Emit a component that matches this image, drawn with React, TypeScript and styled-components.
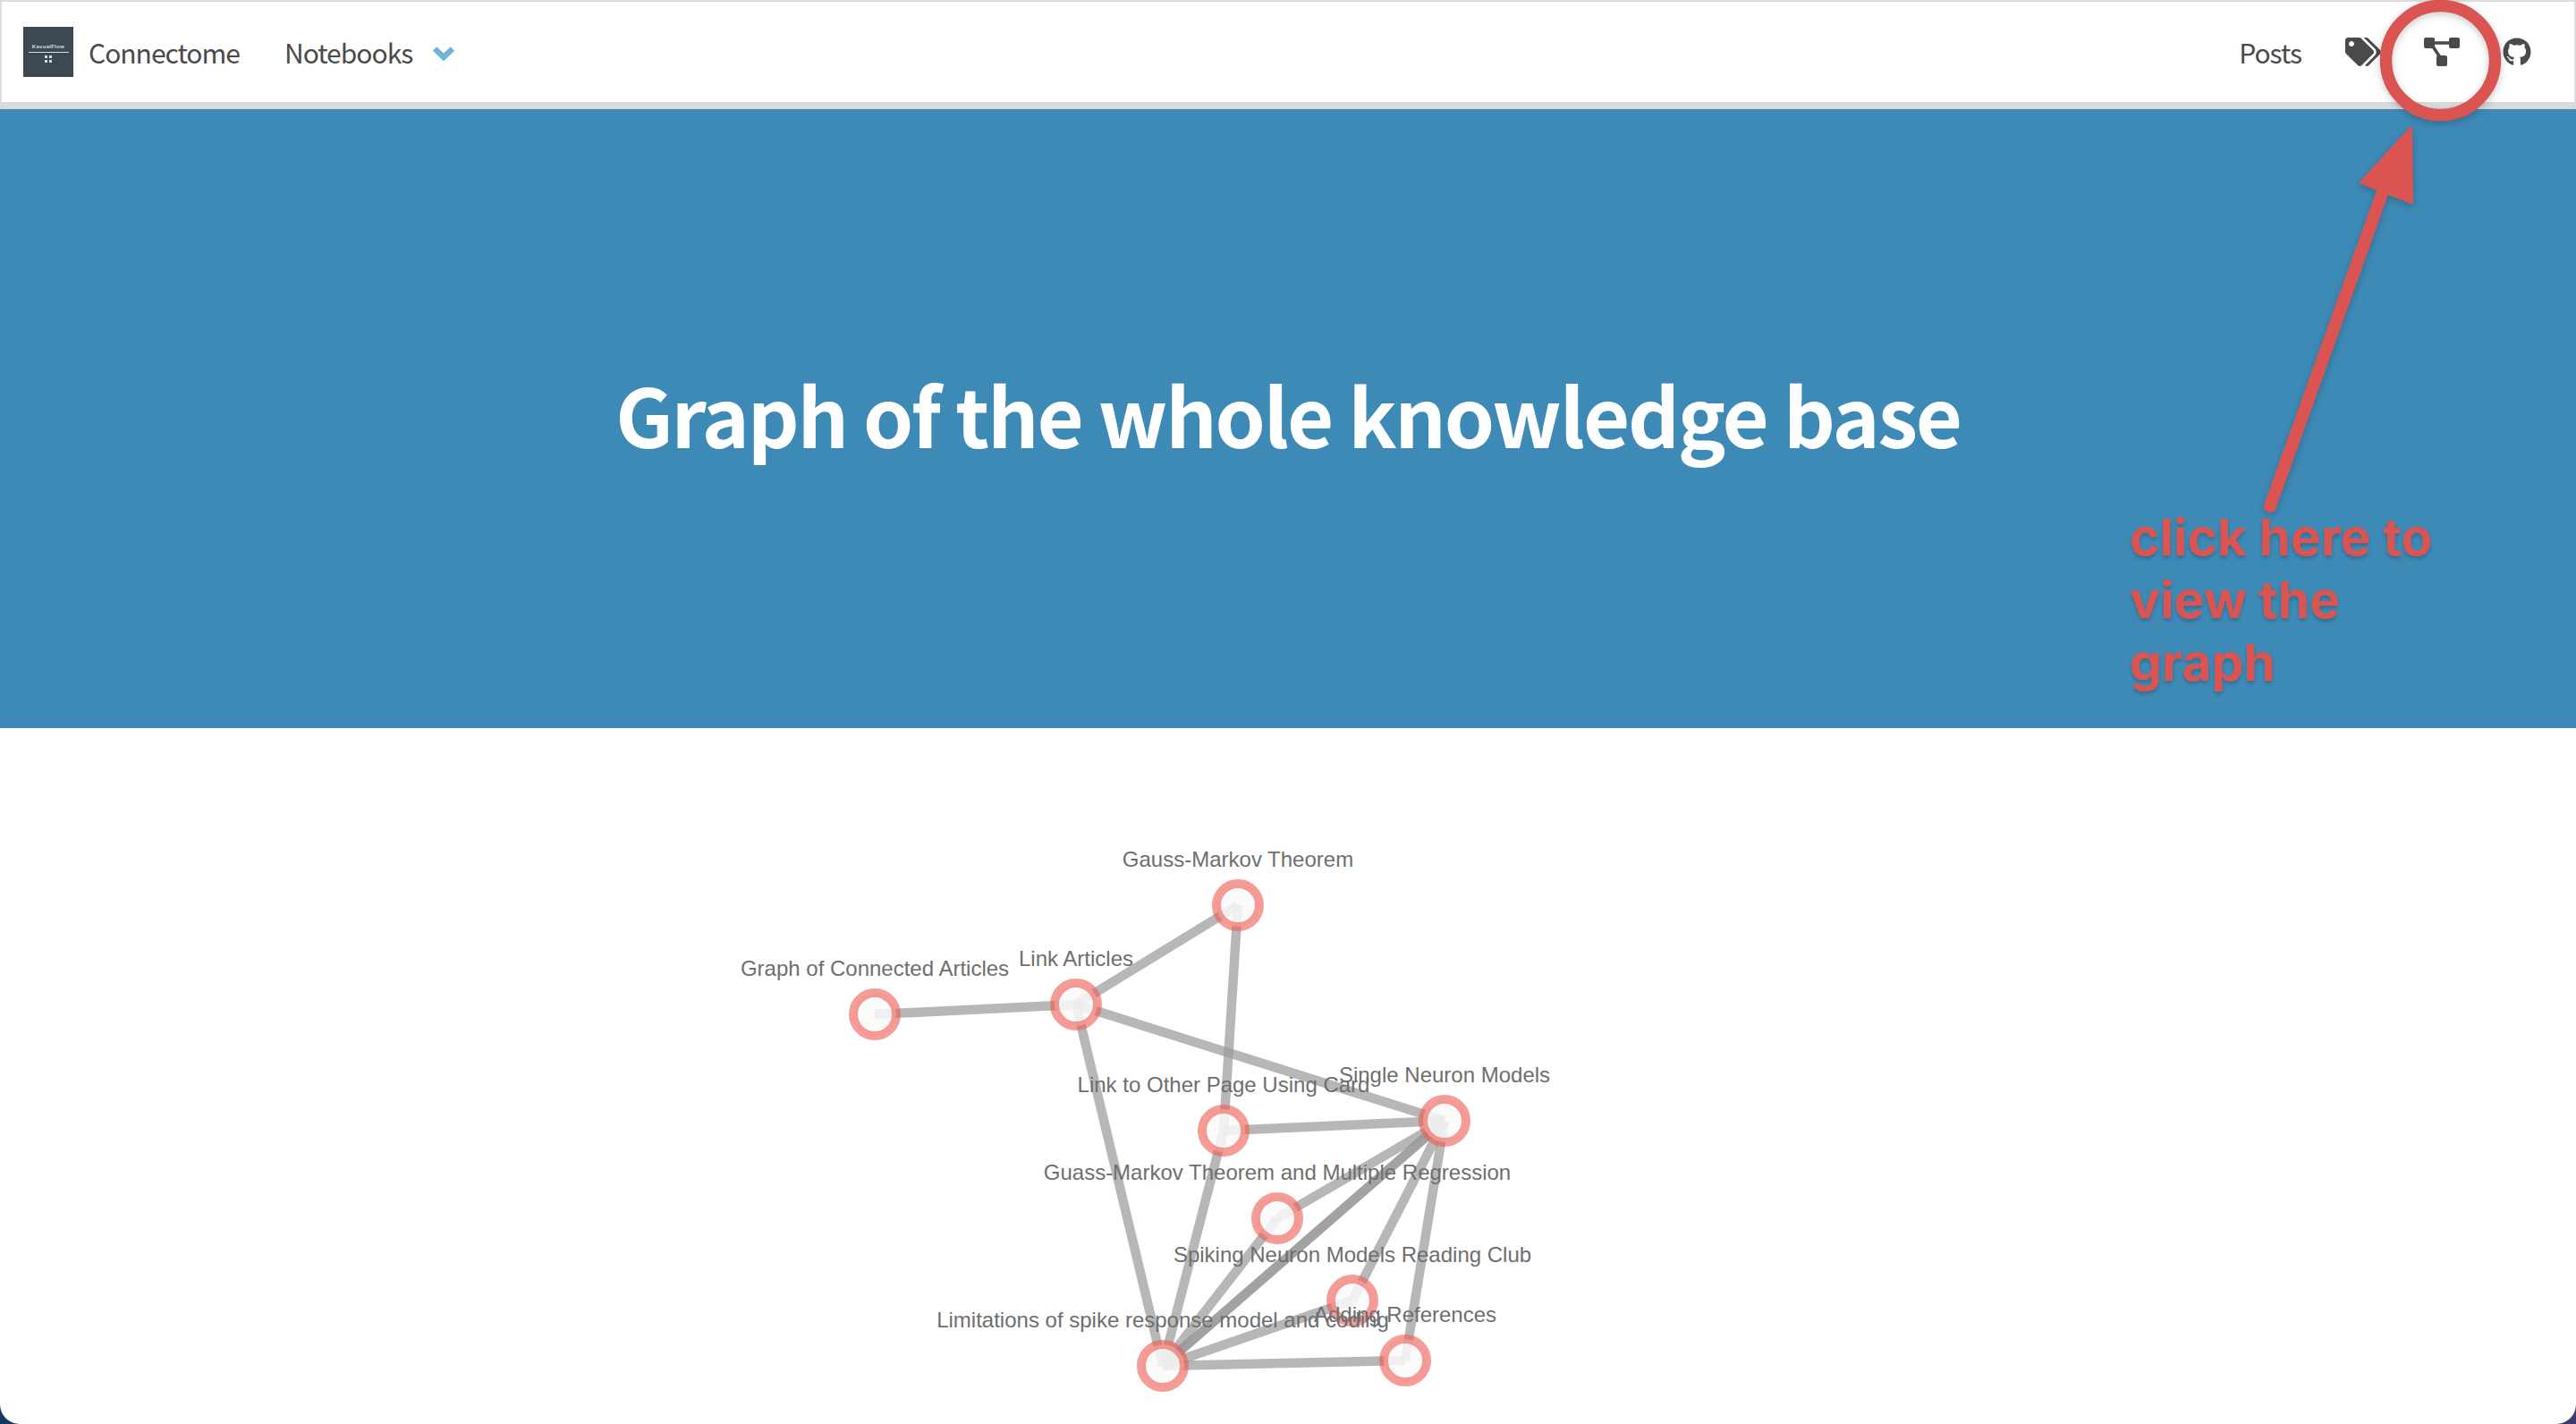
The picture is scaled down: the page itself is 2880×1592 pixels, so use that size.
import React from "react";
import styled, { createGlobalStyle } from "styled-components";
import { FaGithub, FaTags } from "react-icons/fa";

type GraphNode = {
  id: string;
  title: string;
  x: number;
  y: number;
};

const nodes: GraphNode[] = [
  { id: "connected", title: "Graph of Connected Articles", x: 978, y: 1133 },
  { id: "link", title: "Link Articles", x: 1203, y: 1122 },
  { id: "gauss", title: "Gauss-Markov Theorem", x: 1384, y: 1011 },
  { id: "card", title: "Link to Other Page Using Card", x: 1368, y: 1263 },
  { id: "single", title: "Single Neuron Models", x: 1615, y: 1252 },
  { id: "guass", title: "Guass-Markov Theorem and Multiple Regression", x: 1428, y: 1361 },
  { id: "club", title: "Spiking Neuron Models Reading Club", x: 1512, y: 1453 },
  { id: "limits", title: "Limitations of spike response model and coding", x: 1300, y: 1526 },
  { id: "refs", title: "Adding References", x: 1571, y: 1520 },
];

const edges: [string, string][] = [
  ["connected", "link"],
  ["link", "gauss"],
  ["link", "single"],
  ["link", "limits"],
  ["gauss", "card"],
  ["card", "single"],
  ["card", "limits"],
  ["guass", "single"],
  ["guass", "limits"],
  ["single", "limits"],
  ["single", "limits"],
  ["single", "club"],
  ["club", "limits"],
  ["single", "refs"],
  ["refs", "limits"],
];

const findNode = (id: string) => nodes.find((n) => n.id === id) as GraphNode;

const GlobalStyle = createGlobalStyle`
  html, body {
    margin: 0;
    padding: 0;
    background: linear-gradient(90deg, #14395f, #3b3b6b);
  }
`;

export default function App() {
  return (
    <>
      <GlobalStyle />
      <Page>
        <Navbar>
          <NavGroup>
            <Logo>
              <LogoName>KasualFlow</LogoName>
              <LogoRule />
              <LogoDots>
                <i /><i /><i /><i />
              </LogoDots>
            </Logo>
            <BrandLink>Connectome</BrandLink>
            <DropdownLink>
              Notebooks
              <Chevron width="26" height="17" viewBox="0 0 26 17">
                <path d="M3 3.5l10 9.500 10-9.500" fill="none" stroke="#72b5dc" strokeWidth="6.500" />
              </Chevron>
            </DropdownLink>
          </NavGroup>
          <NavIcons>
            <PostsLink>Posts</PostsLink>
            <TagsIcon />
            <GraphIcon width="40" height="32" viewBox="0 0 40 32">
              <rect x="0" y="0" width="12" height="12" rx="2" />
              <rect x="28" y="0" width="12" height="12" rx="2" />
              <rect x="14" y="20" width="12" height="12" rx="2" />
              <path d="M10 6h20M10 10l8 12" stroke="#4a4a4a" strokeWidth="3.5" fill="none" />
            </GraphIcon>
            <GithubIcon />
          </NavIcons>
        </Navbar>

        <Hero>
          <HeroTitle>Graph of the whole knowledge base</HeroTitle>
        </Hero>

        <GraphSection>
          <GraphCanvas viewBox="0 813 2880 778">
            {edges.map(([from, to], i) => {
              const a = findNode(from);
              const b = findNode(to);
              return <Edge key={i} x1={a.x} y1={a.y} x2={b.x} y2={b.y} />;
            })}
            {nodes.map((n) => (
              <Node key={n.id} cx={n.x} cy={n.y} r={24} />
            ))}
            {nodes.map((n) => (
              <Label key={n.id} x={n.x} y={n.y - 43}>
                {n.title}
              </Label>
            ))}
          </GraphCanvas>
        </GraphSection>

        <Annotation viewBox="0 0 2880 1592">
          <circle cx="2728.5" cy="67.5" r="61" fill="none" stroke="#da5552" strokeWidth="13.5" />
          <path
            d="M2538 566L2664 214"
            fill="none"
            stroke="#da5552"
            strokeWidth="14"
            strokeLinecap="round"
          />
          <path
            d="M2695 144L2640 204L2696 226Z"
            fill="#da5552"
            stroke="#da5552"
            strokeWidth="4"
            strokeLinejoin="round"
          />
        </Annotation>
        <AnnotationText>click here to view the graph</AnnotationText>
      </Page>
    </>
  );
}

const Page = styled.div`
  position: relative;
  width: 2880px;
  height: 1592px;
  overflow: hidden;
  background: #fff;
  border-radius: 0 0 22px 22px;
`;

const Navbar = styled.nav`
  box-sizing: border-box;
  display: flex;
  align-items: center;
  justify-content: space-between;
  height: 122px;
  padding: 0 48px 0 24px;
  background: #fff;
  border: 2px solid #dcdcdc;
  border-bottom: 8px solid #d9dadb;
  font-family: "Noto Sans CJK SC", "Source Sans Pro", sans-serif;
  font-size: 30px;
  letter-spacing: -1px;
  color: #4a4a4a;
`;

const NavGroup = styled.div`
  display: flex;
  align-items: center;
`;

const Logo = styled.div`
  box-sizing: border-box;
  display: flex;
  flex-direction: column;
  align-items: center;
  width: 56px;
  height: 56px;
  padding-top: 19px;
  background: #3c4852;
`;

const LogoName = styled.span`
  font-family: "Liberation Sans", sans-serif;
  font-size: 6px;
  line-height: 6px;
  font-weight: 700;
  letter-spacing: 0.3px;
  color: #d8dadc;
`;

const LogoRule = styled.div`
  width: 45px;
  height: 1px;
  margin: 3px 0;
  background: #d8dadc;
`;

const LogoDots = styled.div`
  display: grid;
  grid-template-columns: 3px 3px;
  gap: 2px;

  i {
    width: 3px;
    height: 3px;
    background: #d8dadc;
  }
`;

const BrandLink = styled.a`
  margin-left: 17px;
`;

const DropdownLink = styled.a`
  display: flex;
  align-items: center;
  gap: 22px;
  margin-left: 50px;
`;

const Chevron = styled.svg`
  margin-top: 2px;
`;

const NavIcons = styled.div`
  display: flex;
  align-items: center;
`;

const PostsLink = styled.a`
  margin-right: 49px;
`;

const TagsIcon = styled(FaTags)`
  width: 40px;
  height: 32px;
  margin-right: 48px;
  color: #4a4a4a;
`;

const GraphIcon = styled.svg`
  margin-right: 48px;
  fill: #4a4a4a;
`;

const GithubIcon = styled(FaGithub)`
  width: 32px;
  height: 32px;
  color: #4a4a4a;
`;

const Hero = styled.header`
  box-sizing: border-box;
  display: flex;
  align-items: center;
  justify-content: center;
  height: 692px;
  padding-bottom: 12px;
  background: #3e8ab7;
`;

const HeroTitle = styled.h1`
  margin: 0;
  font-family: "Noto Sans CJK SC", "Source Sans Pro", sans-serif;
  font-size: 90px;
  line-height: 1.1;
  font-weight: 700;
  letter-spacing: -2.2px;
  color: #fff;
`;

const GraphSection = styled.section`
  height: 778px;
`;

const GraphCanvas = styled.svg`
  display: block;
  width: 2880px;
  height: 778px;
`;

const Edge = styled.line`
  stroke: #999;
  stroke-opacity: 0.7;
  stroke-width: 10.5;
`;

const Node = styled.circle`
  fill: #fafafa;
  fill-opacity: 0.85;
  stroke: #f05a50;
  stroke-opacity: 0.6;
  stroke-width: 10;
`;

const Label = styled.text`
  font-family: "Liberation Sans", Arial, sans-serif;
  font-size: 24px;
  fill: #6e6e6e;
  text-anchor: middle;
`;

const Annotation = styled.svg`
  position: absolute;
  top: 0;
  left: 0;
  width: 2880px;
  height: 1592px;
  pointer-events: none;
  filter: drop-shadow(0 3px 4px rgba(0, 0, 0, 0.2));
`;

const AnnotationText = styled.div`
  position: absolute;
  top: 566px;
  left: 2381px;
  width: 350px;
  font-family: Inter, sans-serif;
  font-size: 57px;
  line-height: 70px;
  font-weight: 700;
  color: #da5552;
  text-shadow: 0 3px 4px rgba(0, 0, 0, 0.2);
`;
